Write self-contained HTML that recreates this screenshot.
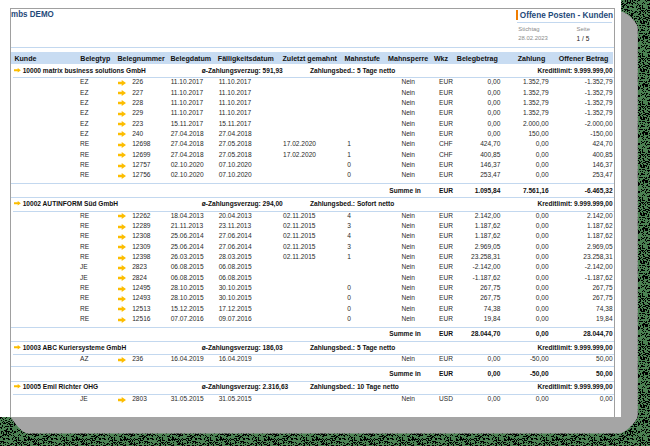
<!DOCTYPE html>
<html><head><meta charset="utf-8"><style>
html,body{margin:0;padding:0;}
body{width:650px;height:446px;position:relative;overflow:hidden;background:#3c6044;font-family:"Liberation Sans",sans-serif;}
.t{position:absolute;white-space:nowrap;}
.r{position:absolute;}
#shadow{position:absolute;left:10.6px;top:11.7px;width:627px;height:422.3px;background:#a5a5a5;border-radius:16.5px;}
#page{position:absolute;left:0;top:0;width:621px;height:417px;background:#fff;overflow:hidden;}
#frame{position:absolute;left:10px;top:8px;width:603px;height:420px;border:1px solid #a0a0a0;border-bottom:none;}
</style></head><body>
<svg id="dither" width="650" height="446" style="position:absolute;left:0;top:0" shape-rendering="crispEdges"><defs><pattern id="pt" width="48" height="48" patternUnits="userSpaceOnUse"><rect width="48" height="48" fill="#4c8253"/><path d="M1 0h1v1h-1zM3 0h1v1h-1zM6 0h1v1h-1zM8 0h1v1h-1zM10 0h1v1h-1zM11 0h1v1h-1zM14 0h1v1h-1zM15 0h1v1h-1zM21 0h1v1h-1zM23 0h1v1h-1zM24 0h1v1h-1zM25 0h1v1h-1zM26 0h1v1h-1zM28 0h1v1h-1zM33 0h1v1h-1zM34 0h1v1h-1zM35 0h1v1h-1zM38 0h1v1h-1zM41 0h1v1h-1zM44 0h1v1h-1zM1 1h1v1h-1zM3 1h1v1h-1zM6 1h1v1h-1zM8 1h1v1h-1zM13 1h1v1h-1zM22 1h1v1h-1zM27 1h1v1h-1zM30 1h1v1h-1zM32 1h1v1h-1zM33 1h1v1h-1zM34 1h1v1h-1zM36 1h1v1h-1zM37 1h1v1h-1zM40 1h1v1h-1zM46 1h1v1h-1zM3 2h1v1h-1zM4 2h1v1h-1zM5 2h1v1h-1zM6 2h1v1h-1zM9 2h1v1h-1zM10 2h1v1h-1zM19 2h1v1h-1zM26 2h1v1h-1zM28 2h1v1h-1zM29 2h1v1h-1zM30 2h1v1h-1zM31 2h1v1h-1zM33 2h1v1h-1zM34 2h1v1h-1zM35 2h1v1h-1zM36 2h1v1h-1zM38 2h1v1h-1zM41 2h1v1h-1zM42 2h1v1h-1zM45 2h1v1h-1zM2 3h1v1h-1zM3 3h1v1h-1zM5 3h1v1h-1zM7 3h1v1h-1zM8 3h1v1h-1zM11 3h1v1h-1zM13 3h1v1h-1zM18 3h1v1h-1zM20 3h1v1h-1zM25 3h1v1h-1zM32 3h1v1h-1zM35 3h1v1h-1zM36 3h1v1h-1zM37 3h1v1h-1zM38 3h1v1h-1zM46 3h1v1h-1zM47 3h1v1h-1zM0 4h1v1h-1zM1 4h1v1h-1zM8 4h1v1h-1zM14 4h1v1h-1zM23 4h1v1h-1zM24 4h1v1h-1zM25 4h1v1h-1zM28 4h1v1h-1zM34 4h1v1h-1zM35 4h1v1h-1zM43 4h1v1h-1zM44 4h1v1h-1zM45 4h1v1h-1zM46 4h1v1h-1zM0 5h1v1h-1zM2 5h1v1h-1zM13 5h1v1h-1zM15 5h1v1h-1zM16 5h1v1h-1zM18 5h1v1h-1zM26 5h1v1h-1zM28 5h1v1h-1zM29 5h1v1h-1zM47 5h1v1h-1zM3 6h1v1h-1zM4 6h1v1h-1zM6 6h1v1h-1zM7 6h1v1h-1zM8 6h1v1h-1zM12 6h1v1h-1zM15 6h1v1h-1zM18 6h1v1h-1zM24 6h1v1h-1zM28 6h1v1h-1zM29 6h1v1h-1zM31 6h1v1h-1zM34 6h1v1h-1zM38 6h1v1h-1zM42 6h1v1h-1zM43 6h1v1h-1zM44 6h1v1h-1zM46 6h1v1h-1zM47 6h1v1h-1zM3 7h1v1h-1zM4 7h1v1h-1zM8 7h1v1h-1zM9 7h1v1h-1zM12 7h1v1h-1zM16 7h1v1h-1zM18 7h1v1h-1zM24 7h1v1h-1zM25 7h1v1h-1zM27 7h1v1h-1zM28 7h1v1h-1zM29 7h1v1h-1zM30 7h1v1h-1zM31 7h1v1h-1zM32 7h1v1h-1zM33 7h1v1h-1zM35 7h1v1h-1zM37 7h1v1h-1zM39 7h1v1h-1zM40 7h1v1h-1zM41 7h1v1h-1zM44 7h1v1h-1zM47 7h1v1h-1zM14 8h1v1h-1zM15 8h1v1h-1zM16 8h1v1h-1zM18 8h1v1h-1zM19 8h1v1h-1zM20 8h1v1h-1zM24 8h1v1h-1zM25 8h1v1h-1zM26 8h1v1h-1zM28 8h1v1h-1zM30 8h1v1h-1zM34 8h1v1h-1zM36 8h1v1h-1zM38 8h1v1h-1zM42 8h1v1h-1zM44 8h1v1h-1zM45 8h1v1h-1zM46 8h1v1h-1zM0 9h1v1h-1zM1 9h1v1h-1zM2 9h1v1h-1zM3 9h1v1h-1zM13 9h1v1h-1zM16 9h1v1h-1zM22 9h1v1h-1zM32 9h1v1h-1zM33 9h1v1h-1zM34 9h1v1h-1zM36 9h1v1h-1zM43 9h1v1h-1zM1 10h1v1h-1zM3 10h1v1h-1zM4 10h1v1h-1zM5 10h1v1h-1zM7 10h1v1h-1zM17 10h1v1h-1zM18 10h1v1h-1zM19 10h1v1h-1zM21 10h1v1h-1zM23 10h1v1h-1zM24 10h1v1h-1zM25 10h1v1h-1zM29 10h1v1h-1zM33 10h1v1h-1zM35 10h1v1h-1zM38 10h1v1h-1zM43 10h1v1h-1zM44 10h1v1h-1zM46 10h1v1h-1zM0 11h1v1h-1zM3 11h1v1h-1zM8 11h1v1h-1zM11 11h1v1h-1zM12 11h1v1h-1zM15 11h1v1h-1zM16 11h1v1h-1zM18 11h1v1h-1zM20 11h1v1h-1zM23 11h1v1h-1zM27 11h1v1h-1zM34 11h1v1h-1zM35 11h1v1h-1zM36 11h1v1h-1zM38 11h1v1h-1zM40 11h1v1h-1zM41 11h1v1h-1zM43 11h1v1h-1zM5 12h1v1h-1zM10 12h1v1h-1zM11 12h1v1h-1zM13 12h1v1h-1zM16 12h1v1h-1zM19 12h1v1h-1zM21 12h1v1h-1zM24 12h1v1h-1zM25 12h1v1h-1zM26 12h1v1h-1zM29 12h1v1h-1zM33 12h1v1h-1zM34 12h1v1h-1zM35 12h1v1h-1zM37 12h1v1h-1zM38 12h1v1h-1zM39 12h1v1h-1zM0 13h1v1h-1zM1 13h1v1h-1zM3 13h1v1h-1zM7 13h1v1h-1zM8 13h1v1h-1zM9 13h1v1h-1zM15 13h1v1h-1zM16 13h1v1h-1zM21 13h1v1h-1zM27 13h1v1h-1zM28 13h1v1h-1zM29 13h1v1h-1zM38 13h1v1h-1zM40 13h1v1h-1zM43 13h1v1h-1zM44 13h1v1h-1zM45 13h1v1h-1zM0 14h1v1h-1zM1 14h1v1h-1zM5 14h1v1h-1zM7 14h1v1h-1zM8 14h1v1h-1zM14 14h1v1h-1zM15 14h1v1h-1zM18 14h1v1h-1zM19 14h1v1h-1zM23 14h1v1h-1zM26 14h1v1h-1zM27 14h1v1h-1zM31 14h1v1h-1zM35 14h1v1h-1zM37 14h1v1h-1zM39 14h1v1h-1zM40 14h1v1h-1zM42 14h1v1h-1zM45 14h1v1h-1zM46 14h1v1h-1zM2 15h1v1h-1zM4 15h1v1h-1zM6 15h1v1h-1zM7 15h1v1h-1zM8 15h1v1h-1zM16 15h1v1h-1zM19 15h1v1h-1zM24 15h1v1h-1zM25 15h1v1h-1zM26 15h1v1h-1zM29 15h1v1h-1zM31 15h1v1h-1zM36 15h1v1h-1zM40 15h1v1h-1zM43 15h1v1h-1zM47 15h1v1h-1zM0 16h1v1h-1zM1 16h1v1h-1zM3 16h1v1h-1zM7 16h1v1h-1zM10 16h1v1h-1zM12 16h1v1h-1zM13 16h1v1h-1zM14 16h1v1h-1zM19 16h1v1h-1zM20 16h1v1h-1zM25 16h1v1h-1zM29 16h1v1h-1zM36 16h1v1h-1zM39 16h1v1h-1zM40 16h1v1h-1zM42 16h1v1h-1zM43 16h1v1h-1zM44 16h1v1h-1zM2 17h1v1h-1zM3 17h1v1h-1zM4 17h1v1h-1zM8 17h1v1h-1zM15 17h1v1h-1zM17 17h1v1h-1zM21 17h1v1h-1zM22 17h1v1h-1zM23 17h1v1h-1zM24 17h1v1h-1zM31 17h1v1h-1zM35 17h1v1h-1zM40 17h1v1h-1zM41 17h1v1h-1zM42 17h1v1h-1zM43 17h1v1h-1zM2 18h1v1h-1zM5 18h1v1h-1zM8 18h1v1h-1zM10 18h1v1h-1zM11 18h1v1h-1zM12 18h1v1h-1zM15 18h1v1h-1zM16 18h1v1h-1zM19 18h1v1h-1zM20 18h1v1h-1zM21 18h1v1h-1zM24 18h1v1h-1zM25 18h1v1h-1zM29 18h1v1h-1zM30 18h1v1h-1zM33 18h1v1h-1zM34 18h1v1h-1zM36 18h1v1h-1zM43 18h1v1h-1zM45 18h1v1h-1zM46 18h1v1h-1zM5 19h1v1h-1zM6 19h1v1h-1zM10 19h1v1h-1zM14 19h1v1h-1zM15 19h1v1h-1zM18 19h1v1h-1zM22 19h1v1h-1zM23 19h1v1h-1zM27 19h1v1h-1zM33 19h1v1h-1zM35 19h1v1h-1zM39 19h1v1h-1zM40 19h1v1h-1zM44 19h1v1h-1zM45 19h1v1h-1zM0 20h1v1h-1zM3 20h1v1h-1zM5 20h1v1h-1zM9 20h1v1h-1zM16 20h1v1h-1zM19 20h1v1h-1zM23 20h1v1h-1zM25 20h1v1h-1zM26 20h1v1h-1zM28 20h1v1h-1zM31 20h1v1h-1zM33 20h1v1h-1zM37 20h1v1h-1zM41 20h1v1h-1zM46 20h1v1h-1zM3 21h1v1h-1zM6 21h1v1h-1zM9 21h1v1h-1zM11 21h1v1h-1zM13 21h1v1h-1zM16 21h1v1h-1zM17 21h1v1h-1zM19 21h1v1h-1zM20 21h1v1h-1zM21 21h1v1h-1zM22 21h1v1h-1zM26 21h1v1h-1zM28 21h1v1h-1zM36 21h1v1h-1zM41 21h1v1h-1zM47 21h1v1h-1zM1 22h1v1h-1zM3 22h1v1h-1zM8 22h1v1h-1zM9 22h1v1h-1zM10 22h1v1h-1zM11 22h1v1h-1zM16 22h1v1h-1zM17 22h1v1h-1zM19 22h1v1h-1zM20 22h1v1h-1zM22 22h1v1h-1zM24 22h1v1h-1zM27 22h1v1h-1zM30 22h1v1h-1zM32 22h1v1h-1zM33 22h1v1h-1zM34 22h1v1h-1zM39 22h1v1h-1zM40 22h1v1h-1zM0 23h1v1h-1zM2 23h1v1h-1zM5 23h1v1h-1zM6 23h1v1h-1zM8 23h1v1h-1zM11 23h1v1h-1zM12 23h1v1h-1zM17 23h1v1h-1zM18 23h1v1h-1zM19 23h1v1h-1zM20 23h1v1h-1zM24 23h1v1h-1zM30 23h1v1h-1zM31 23h1v1h-1zM32 23h1v1h-1zM33 23h1v1h-1zM39 23h1v1h-1zM44 23h1v1h-1zM47 23h1v1h-1zM1 24h1v1h-1zM2 24h1v1h-1zM3 24h1v1h-1zM10 24h1v1h-1zM23 24h1v1h-1zM24 24h1v1h-1zM26 24h1v1h-1zM28 24h1v1h-1zM29 24h1v1h-1zM30 24h1v1h-1zM33 24h1v1h-1zM34 24h1v1h-1zM35 24h1v1h-1zM40 24h1v1h-1zM46 24h1v1h-1zM2 25h1v1h-1zM3 25h1v1h-1zM4 25h1v1h-1zM5 25h1v1h-1zM11 25h1v1h-1zM12 25h1v1h-1zM13 25h1v1h-1zM15 25h1v1h-1zM16 25h1v1h-1zM18 25h1v1h-1zM19 25h1v1h-1zM20 25h1v1h-1zM28 25h1v1h-1zM35 25h1v1h-1zM37 25h1v1h-1zM39 25h1v1h-1zM40 25h1v1h-1zM41 25h1v1h-1zM44 25h1v1h-1zM0 26h1v1h-1zM4 26h1v1h-1zM6 26h1v1h-1zM7 26h1v1h-1zM10 26h1v1h-1zM12 26h1v1h-1zM21 26h1v1h-1zM23 26h1v1h-1zM24 26h1v1h-1zM25 26h1v1h-1zM30 26h1v1h-1zM38 26h1v1h-1zM42 26h1v1h-1zM46 26h1v1h-1zM1 27h1v1h-1zM2 27h1v1h-1zM3 27h1v1h-1zM6 27h1v1h-1zM7 27h1v1h-1zM8 27h1v1h-1zM11 27h1v1h-1zM13 27h1v1h-1zM16 27h1v1h-1zM18 27h1v1h-1zM24 27h1v1h-1zM26 27h1v1h-1zM27 27h1v1h-1zM29 27h1v1h-1zM36 27h1v1h-1zM45 27h1v1h-1zM6 28h1v1h-1zM8 28h1v1h-1zM13 28h1v1h-1zM20 28h1v1h-1zM26 28h1v1h-1zM28 28h1v1h-1zM32 28h1v1h-1zM42 28h1v1h-1zM46 28h1v1h-1zM1 29h1v1h-1zM2 29h1v1h-1zM4 29h1v1h-1zM9 29h1v1h-1zM10 29h1v1h-1zM14 29h1v1h-1zM17 29h1v1h-1zM18 29h1v1h-1zM24 29h1v1h-1zM31 29h1v1h-1zM33 29h1v1h-1zM37 29h1v1h-1zM39 29h1v1h-1zM41 29h1v1h-1zM42 29h1v1h-1zM44 29h1v1h-1zM45 29h1v1h-1zM46 29h1v1h-1zM6 30h1v1h-1zM10 30h1v1h-1zM13 30h1v1h-1zM14 30h1v1h-1zM17 30h1v1h-1zM18 30h1v1h-1zM19 30h1v1h-1zM20 30h1v1h-1zM23 30h1v1h-1zM26 30h1v1h-1zM34 30h1v1h-1zM41 30h1v1h-1zM42 30h1v1h-1zM43 30h1v1h-1zM45 30h1v1h-1zM47 30h1v1h-1zM4 31h1v1h-1zM13 31h1v1h-1zM16 31h1v1h-1zM25 31h1v1h-1zM34 31h1v1h-1zM39 31h1v1h-1zM43 31h1v1h-1zM1 32h1v1h-1zM2 32h1v1h-1zM6 32h1v1h-1zM10 32h1v1h-1zM11 32h1v1h-1zM12 32h1v1h-1zM13 32h1v1h-1zM25 32h1v1h-1zM29 32h1v1h-1zM30 32h1v1h-1zM31 32h1v1h-1zM39 32h1v1h-1zM40 32h1v1h-1zM42 32h1v1h-1zM46 32h1v1h-1zM0 33h1v1h-1zM1 33h1v1h-1zM6 33h1v1h-1zM13 33h1v1h-1zM15 33h1v1h-1zM16 33h1v1h-1zM17 33h1v1h-1zM18 33h1v1h-1zM20 33h1v1h-1zM22 33h1v1h-1zM24 33h1v1h-1zM25 33h1v1h-1zM27 33h1v1h-1zM29 33h1v1h-1zM30 33h1v1h-1zM35 33h1v1h-1zM40 33h1v1h-1zM43 33h1v1h-1zM44 33h1v1h-1zM47 33h1v1h-1zM0 34h1v1h-1zM2 34h1v1h-1zM5 34h1v1h-1zM10 34h1v1h-1zM21 34h1v1h-1zM22 34h1v1h-1zM31 34h1v1h-1zM39 34h1v1h-1zM40 34h1v1h-1zM41 34h1v1h-1zM46 34h1v1h-1zM3 35h1v1h-1zM9 35h1v1h-1zM12 35h1v1h-1zM15 35h1v1h-1zM19 35h1v1h-1zM20 35h1v1h-1zM24 35h1v1h-1zM27 35h1v1h-1zM34 35h1v1h-1zM35 35h1v1h-1zM36 35h1v1h-1zM42 35h1v1h-1zM43 35h1v1h-1zM46 35h1v1h-1zM1 36h1v1h-1zM5 36h1v1h-1zM6 36h1v1h-1zM11 36h1v1h-1zM18 36h1v1h-1zM19 36h1v1h-1zM20 36h1v1h-1zM21 36h1v1h-1zM22 36h1v1h-1zM23 36h1v1h-1zM29 36h1v1h-1zM32 36h1v1h-1zM34 36h1v1h-1zM41 36h1v1h-1zM44 36h1v1h-1zM45 36h1v1h-1zM46 36h1v1h-1zM3 37h1v1h-1zM8 37h1v1h-1zM9 37h1v1h-1zM13 37h1v1h-1zM16 37h1v1h-1zM18 37h1v1h-1zM19 37h1v1h-1zM21 37h1v1h-1zM22 37h1v1h-1zM23 37h1v1h-1zM25 37h1v1h-1zM27 37h1v1h-1zM28 37h1v1h-1zM30 37h1v1h-1zM34 37h1v1h-1zM36 37h1v1h-1zM45 37h1v1h-1zM46 37h1v1h-1zM47 37h1v1h-1zM2 38h1v1h-1zM4 38h1v1h-1zM6 38h1v1h-1zM7 38h1v1h-1zM10 38h1v1h-1zM12 38h1v1h-1zM14 38h1v1h-1zM16 38h1v1h-1zM19 38h1v1h-1zM21 38h1v1h-1zM22 38h1v1h-1zM23 38h1v1h-1zM28 38h1v1h-1zM29 38h1v1h-1zM31 38h1v1h-1zM33 38h1v1h-1zM35 38h1v1h-1zM38 38h1v1h-1zM39 38h1v1h-1zM42 38h1v1h-1zM45 38h1v1h-1zM47 38h1v1h-1zM0 39h1v1h-1zM3 39h1v1h-1zM4 39h1v1h-1zM5 39h1v1h-1zM8 39h1v1h-1zM9 39h1v1h-1zM14 39h1v1h-1zM15 39h1v1h-1zM19 39h1v1h-1zM25 39h1v1h-1zM29 39h1v1h-1zM30 39h1v1h-1zM33 39h1v1h-1zM36 39h1v1h-1zM40 39h1v1h-1zM0 40h1v1h-1zM7 40h1v1h-1zM9 40h1v1h-1zM10 40h1v1h-1zM11 40h1v1h-1zM12 40h1v1h-1zM14 40h1v1h-1zM15 40h1v1h-1zM17 40h1v1h-1zM18 40h1v1h-1zM23 40h1v1h-1zM26 40h1v1h-1zM27 40h1v1h-1zM30 40h1v1h-1zM31 40h1v1h-1zM33 40h1v1h-1zM36 40h1v1h-1zM39 40h1v1h-1zM2 41h1v1h-1zM10 41h1v1h-1zM14 41h1v1h-1zM19 41h1v1h-1zM22 41h1v1h-1zM23 41h1v1h-1zM31 41h1v1h-1zM33 41h1v1h-1zM35 41h1v1h-1zM39 41h1v1h-1zM43 41h1v1h-1zM44 41h1v1h-1zM46 41h1v1h-1zM2 42h1v1h-1zM5 42h1v1h-1zM6 42h1v1h-1zM7 42h1v1h-1zM8 42h1v1h-1zM10 42h1v1h-1zM11 42h1v1h-1zM12 42h1v1h-1zM18 42h1v1h-1zM24 42h1v1h-1zM25 42h1v1h-1zM26 42h1v1h-1zM30 42h1v1h-1zM33 42h1v1h-1zM36 42h1v1h-1zM38 42h1v1h-1zM40 42h1v1h-1zM41 42h1v1h-1zM44 42h1v1h-1zM0 43h1v1h-1zM1 43h1v1h-1zM4 43h1v1h-1zM19 43h1v1h-1zM21 43h1v1h-1zM35 43h1v1h-1zM44 43h1v1h-1zM45 43h1v1h-1zM46 43h1v1h-1zM1 44h1v1h-1zM7 44h1v1h-1zM10 44h1v1h-1zM11 44h1v1h-1zM28 44h1v1h-1zM42 44h1v1h-1zM43 44h1v1h-1zM47 44h1v1h-1zM6 45h1v1h-1zM7 45h1v1h-1zM10 45h1v1h-1zM11 45h1v1h-1zM17 45h1v1h-1zM20 45h1v1h-1zM22 45h1v1h-1zM23 45h1v1h-1zM27 45h1v1h-1zM30 45h1v1h-1zM36 45h1v1h-1zM37 45h1v1h-1zM39 45h1v1h-1zM40 45h1v1h-1zM41 45h1v1h-1zM46 45h1v1h-1zM47 45h1v1h-1zM4 46h1v1h-1zM5 46h1v1h-1zM6 46h1v1h-1zM12 46h1v1h-1zM18 46h1v1h-1zM19 46h1v1h-1zM22 46h1v1h-1zM25 46h1v1h-1zM30 46h1v1h-1zM33 46h1v1h-1zM34 46h1v1h-1zM38 46h1v1h-1zM39 46h1v1h-1zM41 46h1v1h-1zM43 46h1v1h-1zM45 46h1v1h-1zM1 47h1v1h-1zM2 47h1v1h-1zM5 47h1v1h-1zM6 47h1v1h-1zM7 47h1v1h-1zM8 47h1v1h-1zM9 47h1v1h-1zM12 47h1v1h-1zM14 47h1v1h-1zM15 47h1v1h-1zM17 47h1v1h-1zM21 47h1v1h-1zM26 47h1v1h-1zM29 47h1v1h-1zM31 47h1v1h-1zM33 47h1v1h-1zM37 47h1v1h-1zM39 47h1v1h-1zM41 47h1v1h-1zM44 47h1v1h-1z" fill="#000"/></pattern></defs><rect width="650" height="446" fill="url(#pt)"/></svg>
<svg style="position:absolute;left:0;top:0" width="650" height="446"><path d="M10.6 11.7H621.3C626 11.7 637.8 22 637.8 28.6V415C637.8 421 625 433.5 619 433.5H28C22 433.5 13 421 10.6 417Z" fill="#a5a5a5"/></svg>
<div id="page">
<div id="frame"></div>
<div class="t" style="left:11.10px;top:10.83px;font-size:8.0px;line-height:8.0px;font-weight:bold;color:#1f4a7a;transform:scaleY(1.15);transform-origin:0 80%;">mbs DEMO</div>
<div class="r" style="left:515.5px;top:10.2px;width:2.8px;height:9.6px;background:#f07d00"></div>
<div class="t" style="left:519.80px;top:11.96px;font-size:8.2px;line-height:8.2px;font-weight:bold;color:#1f4a7a;">Offene Posten - Kunden</div>
<div class="r" style="left:517px;top:22px;width:95px;height:1px;background:#c3d8ef"></div>
<div class="t" style="left:518.30px;top:26.80px;font-size:5.9px;line-height:5.9px;color:#8a8a8a;">Stichtag</div>
<div class="t" style="left:518.30px;top:36.00px;font-size:5.9px;line-height:5.9px;color:#8a8a8a;">28.02.2023</div>
<div class="t" style="left:576.60px;top:26.80px;font-size:5.9px;line-height:5.9px;color:#8a8a8a;">Seite</div>
<div class="t" style="left:576.60px;top:36.10px;font-size:6.5px;line-height:6.5px;color:#222;">1 / 5</div>
<div class="r" style="left:11px;top:47px;width:603px;height:1px;background:#c3d8ef"></div>
<div class="r" style="left:11px;top:52px;width:602px;height:12.4px;background:#c8dcf2"></div>
<div class="t" style="left:14.40px;top:55.79px;font-size:7.1px;line-height:7.1px;font-weight:bold;color:#111;">Kunde</div>
<div class="t" style="left:80.30px;top:55.79px;font-size:7.1px;line-height:7.1px;font-weight:bold;color:#111;">Belegtyp</div>
<div class="t" style="left:117.50px;top:55.79px;font-size:7.1px;line-height:7.1px;font-weight:bold;color:#111;">Belegnummer</div>
<div class="t" style="left:170.50px;top:55.79px;font-size:7.1px;line-height:7.1px;font-weight:bold;color:#111;">Belegdatum</div>
<div class="t" style="left:217.80px;top:55.79px;font-size:7.1px;line-height:7.1px;font-weight:bold;color:#111;">Fälligkeitsdatum</div>
<div class="t" style="left:282.50px;top:55.79px;font-size:7.1px;line-height:7.1px;font-weight:bold;color:#111;">Zuletzt gemahnt</div>
<div class="t" style="left:344.60px;top:55.79px;font-size:7.1px;line-height:7.1px;font-weight:bold;color:#111;">Mahnstufe</div>
<div class="t" style="left:388.10px;top:55.79px;font-size:7.1px;line-height:7.1px;font-weight:bold;color:#111;">Mahnsperre</div>
<div class="t" style="left:433.90px;top:55.79px;font-size:7.1px;line-height:7.1px;font-weight:bold;color:#111;">Wkz</div>
<div class="t" style="left:456.80px;top:55.79px;font-size:7.1px;line-height:7.1px;font-weight:bold;color:#111;">Belegbetrag</div>
<div class="t" style="left:517.70px;top:55.79px;font-size:7.1px;line-height:7.1px;font-weight:bold;color:#111;">Zahlung</div>
<div class="t" style="left:558.70px;top:55.79px;font-size:7.1px;line-height:7.1px;font-weight:bold;color:#111;">Offener Betrag</div>
<svg class="r" style="left:14.00px;top:67.80px" width="8" height="6" viewBox="0 0 8 6"><path d="M0 1.2H3.7V0L6.9 2.2L3.7 4.4V3.2H0Z" fill="#fcbd00"/></svg>
<div class="t" style="left:22.70px;top:67.82px;font-size:6.6px;line-height:6.6px;font-weight:bold;color:#111;">10000 matrix business solutions GmbH</div>
<div class="t" style="left:201.80px;top:67.82px;font-size:6.6px;line-height:6.6px;font-weight:bold;color:#111;">ø-Zahlungsverzug: 591,93</div>
<div class="t" style="left:310.00px;top:67.82px;font-size:6.6px;line-height:6.6px;font-weight:bold;color:#111;">Zahlungsbed.: 5 Tage netto</div>
<div class="t" style="right:8.40px;top:67.82px;font-size:6.6px;line-height:6.6px;font-weight:bold;color:#111;">Kreditlimit: 9.999.999,00</div>
<div class="r" style="left:13px;top:77px;width:601px;height:1px;background:#c3d8ef"></div>
<div class="t" style="left:80.00px;top:79.32px;font-size:6.6px;line-height:6.6px;color:#2a2a2a;">EZ</div>
<svg class="r" style="left:117.80px;top:79.70px" width="9" height="7" viewBox="0 0 9 7"><path d="M0 1.8H3.7V0L8 3L3.7 6V4.2H0Z" fill="#fcbd00"/></svg>
<div class="t" style="left:132.20px;top:79.32px;font-size:6.6px;line-height:6.6px;color:#2a2a2a;">226</div>
<div class="t" style="left:170.70px;top:79.32px;font-size:6.6px;line-height:6.6px;color:#2a2a2a;">11.10.2017</div>
<div class="t" style="left:218.70px;top:79.32px;font-size:6.6px;line-height:6.6px;color:#2a2a2a;">11.10.2017</div>
<div class="t" style="right:206.00px;top:79.32px;font-size:6.6px;line-height:6.6px;color:#2a2a2a;">Nein</div>
<div class="t" style="left:439.00px;top:79.32px;font-size:6.6px;line-height:6.6px;color:#2a2a2a;">EUR</div>
<div class="t" style="right:120.70px;top:79.32px;font-size:6.6px;line-height:6.6px;color:#2a2a2a;">0,00</div>
<div class="t" style="right:72.40px;top:79.32px;font-size:6.6px;line-height:6.6px;color:#2a2a2a;">1.352,79</div>
<div class="t" style="right:8.40px;top:79.32px;font-size:6.6px;line-height:6.6px;color:#2a2a2a;">-1.352,79</div>
<div class="t" style="left:80.00px;top:89.67px;font-size:6.6px;line-height:6.6px;color:#2a2a2a;">EZ</div>
<svg class="r" style="left:117.80px;top:90.05px" width="9" height="7" viewBox="0 0 9 7"><path d="M0 1.8H3.7V0L8 3L3.7 6V4.2H0Z" fill="#fcbd00"/></svg>
<div class="t" style="left:132.20px;top:89.67px;font-size:6.6px;line-height:6.6px;color:#2a2a2a;">227</div>
<div class="t" style="left:170.70px;top:89.67px;font-size:6.6px;line-height:6.6px;color:#2a2a2a;">11.10.2017</div>
<div class="t" style="left:218.70px;top:89.67px;font-size:6.6px;line-height:6.6px;color:#2a2a2a;">11.10.2017</div>
<div class="t" style="right:206.00px;top:89.67px;font-size:6.6px;line-height:6.6px;color:#2a2a2a;">Nein</div>
<div class="t" style="left:439.00px;top:89.67px;font-size:6.6px;line-height:6.6px;color:#2a2a2a;">EUR</div>
<div class="t" style="right:120.70px;top:89.67px;font-size:6.6px;line-height:6.6px;color:#2a2a2a;">0,00</div>
<div class="t" style="right:72.40px;top:89.67px;font-size:6.6px;line-height:6.6px;color:#2a2a2a;">1.352,79</div>
<div class="t" style="right:8.40px;top:89.67px;font-size:6.6px;line-height:6.6px;color:#2a2a2a;">-1.352,79</div>
<div class="t" style="left:80.00px;top:100.02px;font-size:6.6px;line-height:6.6px;color:#2a2a2a;">EZ</div>
<svg class="r" style="left:117.80px;top:100.40px" width="9" height="7" viewBox="0 0 9 7"><path d="M0 1.8H3.7V0L8 3L3.7 6V4.2H0Z" fill="#fcbd00"/></svg>
<div class="t" style="left:132.20px;top:100.02px;font-size:6.6px;line-height:6.6px;color:#2a2a2a;">228</div>
<div class="t" style="left:170.70px;top:100.02px;font-size:6.6px;line-height:6.6px;color:#2a2a2a;">11.10.2017</div>
<div class="t" style="left:218.70px;top:100.02px;font-size:6.6px;line-height:6.6px;color:#2a2a2a;">11.10.2017</div>
<div class="t" style="right:206.00px;top:100.02px;font-size:6.6px;line-height:6.6px;color:#2a2a2a;">Nein</div>
<div class="t" style="left:439.00px;top:100.02px;font-size:6.6px;line-height:6.6px;color:#2a2a2a;">EUR</div>
<div class="t" style="right:120.70px;top:100.02px;font-size:6.6px;line-height:6.6px;color:#2a2a2a;">0,00</div>
<div class="t" style="right:72.40px;top:100.02px;font-size:6.6px;line-height:6.6px;color:#2a2a2a;">1.352,79</div>
<div class="t" style="right:8.40px;top:100.02px;font-size:6.6px;line-height:6.6px;color:#2a2a2a;">-1.352,79</div>
<div class="t" style="left:80.00px;top:110.37px;font-size:6.6px;line-height:6.6px;color:#2a2a2a;">EZ</div>
<svg class="r" style="left:117.80px;top:110.75px" width="9" height="7" viewBox="0 0 9 7"><path d="M0 1.8H3.7V0L8 3L3.7 6V4.2H0Z" fill="#fcbd00"/></svg>
<div class="t" style="left:132.20px;top:110.37px;font-size:6.6px;line-height:6.6px;color:#2a2a2a;">229</div>
<div class="t" style="left:170.70px;top:110.37px;font-size:6.6px;line-height:6.6px;color:#2a2a2a;">11.10.2017</div>
<div class="t" style="left:218.70px;top:110.37px;font-size:6.6px;line-height:6.6px;color:#2a2a2a;">11.10.2017</div>
<div class="t" style="right:206.00px;top:110.37px;font-size:6.6px;line-height:6.6px;color:#2a2a2a;">Nein</div>
<div class="t" style="left:439.00px;top:110.37px;font-size:6.6px;line-height:6.6px;color:#2a2a2a;">EUR</div>
<div class="t" style="right:120.70px;top:110.37px;font-size:6.6px;line-height:6.6px;color:#2a2a2a;">0,00</div>
<div class="t" style="right:72.40px;top:110.37px;font-size:6.6px;line-height:6.6px;color:#2a2a2a;">1.352,79</div>
<div class="t" style="right:8.40px;top:110.37px;font-size:6.6px;line-height:6.6px;color:#2a2a2a;">-1.352,79</div>
<div class="t" style="left:80.00px;top:120.72px;font-size:6.6px;line-height:6.6px;color:#2a2a2a;">EZ</div>
<svg class="r" style="left:117.80px;top:121.10px" width="9" height="7" viewBox="0 0 9 7"><path d="M0 1.8H3.7V0L8 3L3.7 6V4.2H0Z" fill="#fcbd00"/></svg>
<div class="t" style="left:132.20px;top:120.72px;font-size:6.6px;line-height:6.6px;color:#2a2a2a;">223</div>
<div class="t" style="left:170.70px;top:120.72px;font-size:6.6px;line-height:6.6px;color:#2a2a2a;">15.11.2017</div>
<div class="t" style="left:218.70px;top:120.72px;font-size:6.6px;line-height:6.6px;color:#2a2a2a;">15.11.2017</div>
<div class="t" style="right:206.00px;top:120.72px;font-size:6.6px;line-height:6.6px;color:#2a2a2a;">Nein</div>
<div class="t" style="left:439.00px;top:120.72px;font-size:6.6px;line-height:6.6px;color:#2a2a2a;">EUR</div>
<div class="t" style="right:120.70px;top:120.72px;font-size:6.6px;line-height:6.6px;color:#2a2a2a;">0,00</div>
<div class="t" style="right:72.40px;top:120.72px;font-size:6.6px;line-height:6.6px;color:#2a2a2a;">2.000,00</div>
<div class="t" style="right:8.40px;top:120.72px;font-size:6.6px;line-height:6.6px;color:#2a2a2a;">-2.000,00</div>
<div class="t" style="left:80.00px;top:131.07px;font-size:6.6px;line-height:6.6px;color:#2a2a2a;">EZ</div>
<svg class="r" style="left:117.80px;top:131.45px" width="9" height="7" viewBox="0 0 9 7"><path d="M0 1.8H3.7V0L8 3L3.7 6V4.2H0Z" fill="#fcbd00"/></svg>
<div class="t" style="left:132.20px;top:131.07px;font-size:6.6px;line-height:6.6px;color:#2a2a2a;">240</div>
<div class="t" style="left:170.70px;top:131.07px;font-size:6.6px;line-height:6.6px;color:#2a2a2a;">27.04.2018</div>
<div class="t" style="left:218.70px;top:131.07px;font-size:6.6px;line-height:6.6px;color:#2a2a2a;">27.04.2018</div>
<div class="t" style="right:206.00px;top:131.07px;font-size:6.6px;line-height:6.6px;color:#2a2a2a;">Nein</div>
<div class="t" style="left:439.00px;top:131.07px;font-size:6.6px;line-height:6.6px;color:#2a2a2a;">EUR</div>
<div class="t" style="right:120.70px;top:131.07px;font-size:6.6px;line-height:6.6px;color:#2a2a2a;">0,00</div>
<div class="t" style="right:72.40px;top:131.07px;font-size:6.6px;line-height:6.6px;color:#2a2a2a;">150,00</div>
<div class="t" style="right:8.40px;top:131.07px;font-size:6.6px;line-height:6.6px;color:#2a2a2a;">-150,00</div>
<div class="t" style="left:80.00px;top:141.42px;font-size:6.6px;line-height:6.6px;color:#2a2a2a;">RE</div>
<svg class="r" style="left:117.80px;top:141.80px" width="9" height="7" viewBox="0 0 9 7"><path d="M0 1.8H3.7V0L8 3L3.7 6V4.2H0Z" fill="#fcbd00"/></svg>
<div class="t" style="left:132.20px;top:141.42px;font-size:6.6px;line-height:6.6px;color:#2a2a2a;">12698</div>
<div class="t" style="left:170.70px;top:141.42px;font-size:6.6px;line-height:6.6px;color:#2a2a2a;">27.04.2018</div>
<div class="t" style="left:218.70px;top:141.42px;font-size:6.6px;line-height:6.6px;color:#2a2a2a;">27.05.2018</div>
<div class="t" style="left:283.00px;top:141.42px;font-size:6.6px;line-height:6.6px;color:#2a2a2a;">17.02.2020</div>
<div class="t" style="left:347.30px;top:141.42px;font-size:6.6px;line-height:6.6px;color:#2a2a2a;">1</div>
<div class="t" style="right:206.00px;top:141.42px;font-size:6.6px;line-height:6.6px;color:#2a2a2a;">Nein</div>
<div class="t" style="left:439.00px;top:141.42px;font-size:6.6px;line-height:6.6px;color:#2a2a2a;">CHF</div>
<div class="t" style="right:120.70px;top:141.42px;font-size:6.6px;line-height:6.6px;color:#2a2a2a;">424,70</div>
<div class="t" style="right:72.40px;top:141.42px;font-size:6.6px;line-height:6.6px;color:#2a2a2a;">0,00</div>
<div class="t" style="right:8.40px;top:141.42px;font-size:6.6px;line-height:6.6px;color:#2a2a2a;">424,70</div>
<div class="t" style="left:80.00px;top:151.77px;font-size:6.6px;line-height:6.6px;color:#2a2a2a;">RE</div>
<svg class="r" style="left:117.80px;top:152.15px" width="9" height="7" viewBox="0 0 9 7"><path d="M0 1.8H3.7V0L8 3L3.7 6V4.2H0Z" fill="#fcbd00"/></svg>
<div class="t" style="left:132.20px;top:151.77px;font-size:6.6px;line-height:6.6px;color:#2a2a2a;">12699</div>
<div class="t" style="left:170.70px;top:151.77px;font-size:6.6px;line-height:6.6px;color:#2a2a2a;">27.04.2018</div>
<div class="t" style="left:218.70px;top:151.77px;font-size:6.6px;line-height:6.6px;color:#2a2a2a;">27.05.2018</div>
<div class="t" style="left:283.00px;top:151.77px;font-size:6.6px;line-height:6.6px;color:#2a2a2a;">17.02.2020</div>
<div class="t" style="left:347.30px;top:151.77px;font-size:6.6px;line-height:6.6px;color:#2a2a2a;">1</div>
<div class="t" style="right:206.00px;top:151.77px;font-size:6.6px;line-height:6.6px;color:#2a2a2a;">Nein</div>
<div class="t" style="left:439.00px;top:151.77px;font-size:6.6px;line-height:6.6px;color:#2a2a2a;">CHF</div>
<div class="t" style="right:120.70px;top:151.77px;font-size:6.6px;line-height:6.6px;color:#2a2a2a;">400,85</div>
<div class="t" style="right:72.40px;top:151.77px;font-size:6.6px;line-height:6.6px;color:#2a2a2a;">0,00</div>
<div class="t" style="right:8.40px;top:151.77px;font-size:6.6px;line-height:6.6px;color:#2a2a2a;">400,85</div>
<div class="t" style="left:80.00px;top:162.12px;font-size:6.6px;line-height:6.6px;color:#2a2a2a;">RE</div>
<svg class="r" style="left:117.80px;top:162.50px" width="9" height="7" viewBox="0 0 9 7"><path d="M0 1.8H3.7V0L8 3L3.7 6V4.2H0Z" fill="#fcbd00"/></svg>
<div class="t" style="left:132.20px;top:162.12px;font-size:6.6px;line-height:6.6px;color:#2a2a2a;">12757</div>
<div class="t" style="left:170.70px;top:162.12px;font-size:6.6px;line-height:6.6px;color:#2a2a2a;">02.10.2020</div>
<div class="t" style="left:218.70px;top:162.12px;font-size:6.6px;line-height:6.6px;color:#2a2a2a;">07.10.2020</div>
<div class="t" style="left:347.30px;top:162.12px;font-size:6.6px;line-height:6.6px;color:#2a2a2a;">0</div>
<div class="t" style="right:206.00px;top:162.12px;font-size:6.6px;line-height:6.6px;color:#2a2a2a;">Nein</div>
<div class="t" style="left:439.00px;top:162.12px;font-size:6.6px;line-height:6.6px;color:#2a2a2a;">EUR</div>
<div class="t" style="right:120.70px;top:162.12px;font-size:6.6px;line-height:6.6px;color:#2a2a2a;">146,37</div>
<div class="t" style="right:72.40px;top:162.12px;font-size:6.6px;line-height:6.6px;color:#2a2a2a;">0,00</div>
<div class="t" style="right:8.40px;top:162.12px;font-size:6.6px;line-height:6.6px;color:#2a2a2a;">146,37</div>
<div class="t" style="left:80.00px;top:172.47px;font-size:6.6px;line-height:6.6px;color:#2a2a2a;">RE</div>
<svg class="r" style="left:117.80px;top:172.85px" width="9" height="7" viewBox="0 0 9 7"><path d="M0 1.8H3.7V0L8 3L3.7 6V4.2H0Z" fill="#fcbd00"/></svg>
<div class="t" style="left:132.20px;top:172.47px;font-size:6.6px;line-height:6.6px;color:#2a2a2a;">12756</div>
<div class="t" style="left:170.70px;top:172.47px;font-size:6.6px;line-height:6.6px;color:#2a2a2a;">02.10.2020</div>
<div class="t" style="left:218.70px;top:172.47px;font-size:6.6px;line-height:6.6px;color:#2a2a2a;">07.10.2020</div>
<div class="t" style="left:347.30px;top:172.47px;font-size:6.6px;line-height:6.6px;color:#2a2a2a;">0</div>
<div class="t" style="right:206.00px;top:172.47px;font-size:6.6px;line-height:6.6px;color:#2a2a2a;">Nein</div>
<div class="t" style="left:439.00px;top:172.47px;font-size:6.6px;line-height:6.6px;color:#2a2a2a;">EUR</div>
<div class="t" style="right:120.70px;top:172.47px;font-size:6.6px;line-height:6.6px;color:#2a2a2a;">253,47</div>
<div class="t" style="right:72.40px;top:172.47px;font-size:6.6px;line-height:6.6px;color:#2a2a2a;">0,00</div>
<div class="t" style="right:8.40px;top:172.47px;font-size:6.6px;line-height:6.6px;color:#2a2a2a;">253,47</div>
<div class="r" style="left:11px;top:183px;width:603px;height:1px;background:#c3d8ef"></div>
<div class="t" style="right:200.20px;top:187.52px;font-size:6.6px;line-height:6.6px;font-weight:bold;color:#111;">Summe in</div>
<div class="t" style="left:439.00px;top:187.52px;font-size:6.6px;line-height:6.6px;font-weight:bold;color:#111;">EUR</div>
<div class="t" style="right:120.70px;top:187.52px;font-size:6.6px;line-height:6.6px;font-weight:bold;color:#111;">1.095,84</div>
<div class="t" style="right:72.40px;top:187.52px;font-size:6.6px;line-height:6.6px;font-weight:bold;color:#111;">7.561,16</div>
<div class="t" style="right:8.40px;top:187.52px;font-size:6.6px;line-height:6.6px;font-weight:bold;color:#111;">-6.465,32</div>
<div class="r" style="left:11px;top:197px;width:603px;height:1px;background:#c3d8ef"></div>
<svg class="r" style="left:14.00px;top:200.60px" width="8" height="6" viewBox="0 0 8 6"><path d="M0 1.2H3.7V0L6.9 2.2L3.7 4.4V3.2H0Z" fill="#fcbd00"/></svg>
<div class="t" style="left:22.70px;top:200.62px;font-size:6.6px;line-height:6.6px;font-weight:bold;color:#111;">10002 AUTINFORM Süd GmbH</div>
<div class="t" style="left:201.80px;top:200.62px;font-size:6.6px;line-height:6.6px;font-weight:bold;color:#111;">ø-Zahlungsverzug: 294,00</div>
<div class="t" style="left:310.00px;top:200.62px;font-size:6.6px;line-height:6.6px;font-weight:bold;color:#111;">Zahlungsbed.: Sofort netto</div>
<div class="t" style="right:8.40px;top:200.62px;font-size:6.6px;line-height:6.6px;font-weight:bold;color:#111;">Kreditlimit: 9.999.999,00</div>
<div class="r" style="left:13px;top:211px;width:601px;height:1px;background:#c3d8ef"></div>
<div class="t" style="left:80.00px;top:212.82px;font-size:6.6px;line-height:6.6px;color:#2a2a2a;">RE</div>
<svg class="r" style="left:117.80px;top:213.20px" width="9" height="7" viewBox="0 0 9 7"><path d="M0 1.8H3.7V0L8 3L3.7 6V4.2H0Z" fill="#fcbd00"/></svg>
<div class="t" style="left:132.20px;top:212.82px;font-size:6.6px;line-height:6.6px;color:#2a2a2a;">12262</div>
<div class="t" style="left:170.70px;top:212.82px;font-size:6.6px;line-height:6.6px;color:#2a2a2a;">18.04.2013</div>
<div class="t" style="left:218.70px;top:212.82px;font-size:6.6px;line-height:6.6px;color:#2a2a2a;">20.04.2013</div>
<div class="t" style="left:283.00px;top:212.82px;font-size:6.6px;line-height:6.6px;color:#2a2a2a;">02.11.2015</div>
<div class="t" style="left:347.30px;top:212.82px;font-size:6.6px;line-height:6.6px;color:#2a2a2a;">4</div>
<div class="t" style="right:206.00px;top:212.82px;font-size:6.6px;line-height:6.6px;color:#2a2a2a;">Nein</div>
<div class="t" style="left:439.00px;top:212.82px;font-size:6.6px;line-height:6.6px;color:#2a2a2a;">EUR</div>
<div class="t" style="right:120.70px;top:212.82px;font-size:6.6px;line-height:6.6px;color:#2a2a2a;">2.142,00</div>
<div class="t" style="right:72.40px;top:212.82px;font-size:6.6px;line-height:6.6px;color:#2a2a2a;">0,00</div>
<div class="t" style="right:8.40px;top:212.82px;font-size:6.6px;line-height:6.6px;color:#2a2a2a;">2.142,00</div>
<div class="t" style="left:80.00px;top:223.15px;font-size:6.6px;line-height:6.6px;color:#2a2a2a;">RE</div>
<svg class="r" style="left:117.80px;top:223.53px" width="9" height="7" viewBox="0 0 9 7"><path d="M0 1.8H3.7V0L8 3L3.7 6V4.2H0Z" fill="#fcbd00"/></svg>
<div class="t" style="left:132.20px;top:223.15px;font-size:6.6px;line-height:6.6px;color:#2a2a2a;">12289</div>
<div class="t" style="left:170.70px;top:223.15px;font-size:6.6px;line-height:6.6px;color:#2a2a2a;">21.11.2013</div>
<div class="t" style="left:218.70px;top:223.15px;font-size:6.6px;line-height:6.6px;color:#2a2a2a;">23.11.2013</div>
<div class="t" style="left:283.00px;top:223.15px;font-size:6.6px;line-height:6.6px;color:#2a2a2a;">02.11.2015</div>
<div class="t" style="left:347.30px;top:223.15px;font-size:6.6px;line-height:6.6px;color:#2a2a2a;">3</div>
<div class="t" style="right:206.00px;top:223.15px;font-size:6.6px;line-height:6.6px;color:#2a2a2a;">Nein</div>
<div class="t" style="left:439.00px;top:223.15px;font-size:6.6px;line-height:6.6px;color:#2a2a2a;">EUR</div>
<div class="t" style="right:120.70px;top:223.15px;font-size:6.6px;line-height:6.6px;color:#2a2a2a;">1.187,62</div>
<div class="t" style="right:72.40px;top:223.15px;font-size:6.6px;line-height:6.6px;color:#2a2a2a;">0,00</div>
<div class="t" style="right:8.40px;top:223.15px;font-size:6.6px;line-height:6.6px;color:#2a2a2a;">1.187,62</div>
<div class="t" style="left:80.00px;top:233.48px;font-size:6.6px;line-height:6.6px;color:#2a2a2a;">RE</div>
<svg class="r" style="left:117.80px;top:233.86px" width="9" height="7" viewBox="0 0 9 7"><path d="M0 1.8H3.7V0L8 3L3.7 6V4.2H0Z" fill="#fcbd00"/></svg>
<div class="t" style="left:132.20px;top:233.48px;font-size:6.6px;line-height:6.6px;color:#2a2a2a;">12308</div>
<div class="t" style="left:170.70px;top:233.48px;font-size:6.6px;line-height:6.6px;color:#2a2a2a;">25.06.2014</div>
<div class="t" style="left:218.70px;top:233.48px;font-size:6.6px;line-height:6.6px;color:#2a2a2a;">27.06.2014</div>
<div class="t" style="left:283.00px;top:233.48px;font-size:6.6px;line-height:6.6px;color:#2a2a2a;">02.11.2015</div>
<div class="t" style="left:347.30px;top:233.48px;font-size:6.6px;line-height:6.6px;color:#2a2a2a;">4</div>
<div class="t" style="right:206.00px;top:233.48px;font-size:6.6px;line-height:6.6px;color:#2a2a2a;">Nein</div>
<div class="t" style="left:439.00px;top:233.48px;font-size:6.6px;line-height:6.6px;color:#2a2a2a;">EUR</div>
<div class="t" style="right:120.70px;top:233.48px;font-size:6.6px;line-height:6.6px;color:#2a2a2a;">1.187,62</div>
<div class="t" style="right:72.40px;top:233.48px;font-size:6.6px;line-height:6.6px;color:#2a2a2a;">0,00</div>
<div class="t" style="right:8.40px;top:233.48px;font-size:6.6px;line-height:6.6px;color:#2a2a2a;">1.187,62</div>
<div class="t" style="left:80.00px;top:243.81px;font-size:6.6px;line-height:6.6px;color:#2a2a2a;">RE</div>
<svg class="r" style="left:117.80px;top:244.19px" width="9" height="7" viewBox="0 0 9 7"><path d="M0 1.8H3.7V0L8 3L3.7 6V4.2H0Z" fill="#fcbd00"/></svg>
<div class="t" style="left:132.20px;top:243.81px;font-size:6.6px;line-height:6.6px;color:#2a2a2a;">12309</div>
<div class="t" style="left:170.70px;top:243.81px;font-size:6.6px;line-height:6.6px;color:#2a2a2a;">25.06.2014</div>
<div class="t" style="left:218.70px;top:243.81px;font-size:6.6px;line-height:6.6px;color:#2a2a2a;">27.06.2014</div>
<div class="t" style="left:283.00px;top:243.81px;font-size:6.6px;line-height:6.6px;color:#2a2a2a;">02.11.2015</div>
<div class="t" style="left:347.30px;top:243.81px;font-size:6.6px;line-height:6.6px;color:#2a2a2a;">3</div>
<div class="t" style="right:206.00px;top:243.81px;font-size:6.6px;line-height:6.6px;color:#2a2a2a;">Nein</div>
<div class="t" style="left:439.00px;top:243.81px;font-size:6.6px;line-height:6.6px;color:#2a2a2a;">EUR</div>
<div class="t" style="right:120.70px;top:243.81px;font-size:6.6px;line-height:6.6px;color:#2a2a2a;">2.969,05</div>
<div class="t" style="right:72.40px;top:243.81px;font-size:6.6px;line-height:6.6px;color:#2a2a2a;">0,00</div>
<div class="t" style="right:8.40px;top:243.81px;font-size:6.6px;line-height:6.6px;color:#2a2a2a;">2.969,05</div>
<div class="t" style="left:80.00px;top:254.14px;font-size:6.6px;line-height:6.6px;color:#2a2a2a;">RE</div>
<svg class="r" style="left:117.80px;top:254.52px" width="9" height="7" viewBox="0 0 9 7"><path d="M0 1.8H3.7V0L8 3L3.7 6V4.2H0Z" fill="#fcbd00"/></svg>
<div class="t" style="left:132.20px;top:254.14px;font-size:6.6px;line-height:6.6px;color:#2a2a2a;">12398</div>
<div class="t" style="left:170.70px;top:254.14px;font-size:6.6px;line-height:6.6px;color:#2a2a2a;">26.03.2015</div>
<div class="t" style="left:218.70px;top:254.14px;font-size:6.6px;line-height:6.6px;color:#2a2a2a;">28.03.2015</div>
<div class="t" style="left:283.00px;top:254.14px;font-size:6.6px;line-height:6.6px;color:#2a2a2a;">02.11.2015</div>
<div class="t" style="left:347.30px;top:254.14px;font-size:6.6px;line-height:6.6px;color:#2a2a2a;">1</div>
<div class="t" style="right:206.00px;top:254.14px;font-size:6.6px;line-height:6.6px;color:#2a2a2a;">Nein</div>
<div class="t" style="left:439.00px;top:254.14px;font-size:6.6px;line-height:6.6px;color:#2a2a2a;">EUR</div>
<div class="t" style="right:120.70px;top:254.14px;font-size:6.6px;line-height:6.6px;color:#2a2a2a;">23.258,31</div>
<div class="t" style="right:72.40px;top:254.14px;font-size:6.6px;line-height:6.6px;color:#2a2a2a;">0,00</div>
<div class="t" style="right:8.40px;top:254.14px;font-size:6.6px;line-height:6.6px;color:#2a2a2a;">23.258,31</div>
<div class="t" style="left:80.00px;top:264.47px;font-size:6.6px;line-height:6.6px;color:#2a2a2a;">JE</div>
<svg class="r" style="left:117.80px;top:264.85px" width="9" height="7" viewBox="0 0 9 7"><path d="M0 1.8H3.7V0L8 3L3.7 6V4.2H0Z" fill="#fcbd00"/></svg>
<div class="t" style="left:132.20px;top:264.47px;font-size:6.6px;line-height:6.6px;color:#2a2a2a;">2823</div>
<div class="t" style="left:170.70px;top:264.47px;font-size:6.6px;line-height:6.6px;color:#2a2a2a;">06.08.2015</div>
<div class="t" style="left:218.70px;top:264.47px;font-size:6.6px;line-height:6.6px;color:#2a2a2a;">06.08.2015</div>
<div class="t" style="right:206.00px;top:264.47px;font-size:6.6px;line-height:6.6px;color:#2a2a2a;">Nein</div>
<div class="t" style="left:439.00px;top:264.47px;font-size:6.6px;line-height:6.6px;color:#2a2a2a;">EUR</div>
<div class="t" style="right:120.70px;top:264.47px;font-size:6.6px;line-height:6.6px;color:#2a2a2a;">-2.142,00</div>
<div class="t" style="right:72.40px;top:264.47px;font-size:6.6px;line-height:6.6px;color:#2a2a2a;">0,00</div>
<div class="t" style="right:8.40px;top:264.47px;font-size:6.6px;line-height:6.6px;color:#2a2a2a;">-2.142,00</div>
<div class="t" style="left:80.00px;top:274.80px;font-size:6.6px;line-height:6.6px;color:#2a2a2a;">JE</div>
<svg class="r" style="left:117.80px;top:275.18px" width="9" height="7" viewBox="0 0 9 7"><path d="M0 1.8H3.7V0L8 3L3.7 6V4.2H0Z" fill="#fcbd00"/></svg>
<div class="t" style="left:132.20px;top:274.80px;font-size:6.6px;line-height:6.6px;color:#2a2a2a;">2824</div>
<div class="t" style="left:170.70px;top:274.80px;font-size:6.6px;line-height:6.6px;color:#2a2a2a;">06.08.2015</div>
<div class="t" style="left:218.70px;top:274.80px;font-size:6.6px;line-height:6.6px;color:#2a2a2a;">06.08.2015</div>
<div class="t" style="right:206.00px;top:274.80px;font-size:6.6px;line-height:6.6px;color:#2a2a2a;">Nein</div>
<div class="t" style="left:439.00px;top:274.80px;font-size:6.6px;line-height:6.6px;color:#2a2a2a;">EUR</div>
<div class="t" style="right:120.70px;top:274.80px;font-size:6.6px;line-height:6.6px;color:#2a2a2a;">-1.187,62</div>
<div class="t" style="right:72.40px;top:274.80px;font-size:6.6px;line-height:6.6px;color:#2a2a2a;">0,00</div>
<div class="t" style="right:8.40px;top:274.80px;font-size:6.6px;line-height:6.6px;color:#2a2a2a;">-1.187,62</div>
<div class="t" style="left:80.00px;top:285.13px;font-size:6.6px;line-height:6.6px;color:#2a2a2a;">RE</div>
<svg class="r" style="left:117.80px;top:285.51px" width="9" height="7" viewBox="0 0 9 7"><path d="M0 1.8H3.7V0L8 3L3.7 6V4.2H0Z" fill="#fcbd00"/></svg>
<div class="t" style="left:132.20px;top:285.13px;font-size:6.6px;line-height:6.6px;color:#2a2a2a;">12495</div>
<div class="t" style="left:170.70px;top:285.13px;font-size:6.6px;line-height:6.6px;color:#2a2a2a;">28.10.2015</div>
<div class="t" style="left:218.70px;top:285.13px;font-size:6.6px;line-height:6.6px;color:#2a2a2a;">30.10.2015</div>
<div class="t" style="left:347.30px;top:285.13px;font-size:6.6px;line-height:6.6px;color:#2a2a2a;">0</div>
<div class="t" style="right:206.00px;top:285.13px;font-size:6.6px;line-height:6.6px;color:#2a2a2a;">Nein</div>
<div class="t" style="left:439.00px;top:285.13px;font-size:6.6px;line-height:6.6px;color:#2a2a2a;">EUR</div>
<div class="t" style="right:120.70px;top:285.13px;font-size:6.6px;line-height:6.6px;color:#2a2a2a;">267,75</div>
<div class="t" style="right:72.40px;top:285.13px;font-size:6.6px;line-height:6.6px;color:#2a2a2a;">0,00</div>
<div class="t" style="right:8.40px;top:285.13px;font-size:6.6px;line-height:6.6px;color:#2a2a2a;">267,75</div>
<div class="t" style="left:80.00px;top:295.46px;font-size:6.6px;line-height:6.6px;color:#2a2a2a;">RE</div>
<svg class="r" style="left:117.80px;top:295.84px" width="9" height="7" viewBox="0 0 9 7"><path d="M0 1.8H3.7V0L8 3L3.7 6V4.2H0Z" fill="#fcbd00"/></svg>
<div class="t" style="left:132.20px;top:295.46px;font-size:6.6px;line-height:6.6px;color:#2a2a2a;">12493</div>
<div class="t" style="left:170.70px;top:295.46px;font-size:6.6px;line-height:6.6px;color:#2a2a2a;">28.10.2015</div>
<div class="t" style="left:218.70px;top:295.46px;font-size:6.6px;line-height:6.6px;color:#2a2a2a;">30.10.2015</div>
<div class="t" style="left:347.30px;top:295.46px;font-size:6.6px;line-height:6.6px;color:#2a2a2a;">0</div>
<div class="t" style="right:206.00px;top:295.46px;font-size:6.6px;line-height:6.6px;color:#2a2a2a;">Nein</div>
<div class="t" style="left:439.00px;top:295.46px;font-size:6.6px;line-height:6.6px;color:#2a2a2a;">EUR</div>
<div class="t" style="right:120.70px;top:295.46px;font-size:6.6px;line-height:6.6px;color:#2a2a2a;">267,75</div>
<div class="t" style="right:72.40px;top:295.46px;font-size:6.6px;line-height:6.6px;color:#2a2a2a;">0,00</div>
<div class="t" style="right:8.40px;top:295.46px;font-size:6.6px;line-height:6.6px;color:#2a2a2a;">267,75</div>
<div class="t" style="left:80.00px;top:305.79px;font-size:6.6px;line-height:6.6px;color:#2a2a2a;">RE</div>
<svg class="r" style="left:117.80px;top:306.17px" width="9" height="7" viewBox="0 0 9 7"><path d="M0 1.8H3.7V0L8 3L3.7 6V4.2H0Z" fill="#fcbd00"/></svg>
<div class="t" style="left:132.20px;top:305.79px;font-size:6.6px;line-height:6.6px;color:#2a2a2a;">12513</div>
<div class="t" style="left:170.70px;top:305.79px;font-size:6.6px;line-height:6.6px;color:#2a2a2a;">15.12.2015</div>
<div class="t" style="left:218.70px;top:305.79px;font-size:6.6px;line-height:6.6px;color:#2a2a2a;">17.12.2015</div>
<div class="t" style="left:347.30px;top:305.79px;font-size:6.6px;line-height:6.6px;color:#2a2a2a;">0</div>
<div class="t" style="right:206.00px;top:305.79px;font-size:6.6px;line-height:6.6px;color:#2a2a2a;">Nein</div>
<div class="t" style="left:439.00px;top:305.79px;font-size:6.6px;line-height:6.6px;color:#2a2a2a;">EUR</div>
<div class="t" style="right:120.70px;top:305.79px;font-size:6.6px;line-height:6.6px;color:#2a2a2a;">74,38</div>
<div class="t" style="right:72.40px;top:305.79px;font-size:6.6px;line-height:6.6px;color:#2a2a2a;">0,00</div>
<div class="t" style="right:8.40px;top:305.79px;font-size:6.6px;line-height:6.6px;color:#2a2a2a;">74,38</div>
<div class="t" style="left:80.00px;top:316.12px;font-size:6.6px;line-height:6.6px;color:#2a2a2a;">RE</div>
<svg class="r" style="left:117.80px;top:316.50px" width="9" height="7" viewBox="0 0 9 7"><path d="M0 1.8H3.7V0L8 3L3.7 6V4.2H0Z" fill="#fcbd00"/></svg>
<div class="t" style="left:132.20px;top:316.12px;font-size:6.6px;line-height:6.6px;color:#2a2a2a;">12516</div>
<div class="t" style="left:170.70px;top:316.12px;font-size:6.6px;line-height:6.6px;color:#2a2a2a;">07.07.2016</div>
<div class="t" style="left:218.70px;top:316.12px;font-size:6.6px;line-height:6.6px;color:#2a2a2a;">09.07.2016</div>
<div class="t" style="left:347.30px;top:316.12px;font-size:6.6px;line-height:6.6px;color:#2a2a2a;">0</div>
<div class="t" style="right:206.00px;top:316.12px;font-size:6.6px;line-height:6.6px;color:#2a2a2a;">Nein</div>
<div class="t" style="left:439.00px;top:316.12px;font-size:6.6px;line-height:6.6px;color:#2a2a2a;">EUR</div>
<div class="t" style="right:120.70px;top:316.12px;font-size:6.6px;line-height:6.6px;color:#2a2a2a;">19,84</div>
<div class="t" style="right:72.40px;top:316.12px;font-size:6.6px;line-height:6.6px;color:#2a2a2a;">0,00</div>
<div class="t" style="right:8.40px;top:316.12px;font-size:6.6px;line-height:6.6px;color:#2a2a2a;">19,84</div>
<div class="r" style="left:11px;top:327px;width:603px;height:1px;background:#c3d8ef"></div>
<div class="t" style="right:200.20px;top:331.02px;font-size:6.6px;line-height:6.6px;font-weight:bold;color:#111;">Summe in</div>
<div class="t" style="left:439.00px;top:331.02px;font-size:6.6px;line-height:6.6px;font-weight:bold;color:#111;">EUR</div>
<div class="t" style="right:120.70px;top:331.02px;font-size:6.6px;line-height:6.6px;font-weight:bold;color:#111;">28.044,70</div>
<div class="t" style="right:72.40px;top:331.02px;font-size:6.6px;line-height:6.6px;font-weight:bold;color:#111;">0,00</div>
<div class="t" style="right:8.40px;top:331.02px;font-size:6.6px;line-height:6.6px;font-weight:bold;color:#111;">28.044,70</div>
<div class="r" style="left:11px;top:341px;width:603px;height:1px;background:#c3d8ef"></div>
<svg class="r" style="left:14.00px;top:344.60px" width="8" height="6" viewBox="0 0 8 6"><path d="M0 1.2H3.7V0L6.9 2.2L3.7 4.4V3.2H0Z" fill="#fcbd00"/></svg>
<div class="t" style="left:22.70px;top:344.62px;font-size:6.6px;line-height:6.6px;font-weight:bold;color:#111;">10003 ABC Kuriersysteme GmbH</div>
<div class="t" style="left:201.80px;top:344.62px;font-size:6.6px;line-height:6.6px;font-weight:bold;color:#111;">ø-Zahlungsverzug: 186,03</div>
<div class="t" style="left:310.00px;top:344.62px;font-size:6.6px;line-height:6.6px;font-weight:bold;color:#111;">Zahlungsbed.: 5 Tage netto</div>
<div class="t" style="right:8.40px;top:344.62px;font-size:6.6px;line-height:6.6px;font-weight:bold;color:#111;">Kreditlimit: 9.999.999,00</div>
<div class="r" style="left:13px;top:354px;width:601px;height:1px;background:#c3d8ef"></div>
<div class="t" style="left:80.00px;top:356.12px;font-size:6.6px;line-height:6.6px;color:#2a2a2a;">AZ</div>
<svg class="r" style="left:117.80px;top:356.50px" width="9" height="7" viewBox="0 0 9 7"><path d="M0 1.8H3.7V0L8 3L3.7 6V4.2H0Z" fill="#fcbd00"/></svg>
<div class="t" style="left:132.20px;top:356.12px;font-size:6.6px;line-height:6.6px;color:#2a2a2a;">236</div>
<div class="t" style="left:170.70px;top:356.12px;font-size:6.6px;line-height:6.6px;color:#2a2a2a;">16.04.2019</div>
<div class="t" style="left:218.70px;top:356.12px;font-size:6.6px;line-height:6.6px;color:#2a2a2a;">16.04.2019</div>
<div class="t" style="right:206.00px;top:356.12px;font-size:6.6px;line-height:6.6px;color:#2a2a2a;">Nein</div>
<div class="t" style="left:439.00px;top:356.12px;font-size:6.6px;line-height:6.6px;color:#2a2a2a;">EUR</div>
<div class="t" style="right:120.70px;top:356.12px;font-size:6.6px;line-height:6.6px;color:#2a2a2a;">0,00</div>
<div class="t" style="right:72.40px;top:356.12px;font-size:6.6px;line-height:6.6px;color:#2a2a2a;">-50,00</div>
<div class="t" style="right:8.40px;top:356.12px;font-size:6.6px;line-height:6.6px;color:#2a2a2a;">50,00</div>
<div class="r" style="left:11px;top:366px;width:603px;height:1px;background:#c3d8ef"></div>
<div class="t" style="right:200.20px;top:371.02px;font-size:6.6px;line-height:6.6px;font-weight:bold;color:#111;">Summe in</div>
<div class="t" style="left:439.00px;top:371.02px;font-size:6.6px;line-height:6.6px;font-weight:bold;color:#111;">EUR</div>
<div class="t" style="right:120.70px;top:371.02px;font-size:6.6px;line-height:6.6px;font-weight:bold;color:#111;">0,00</div>
<div class="t" style="right:72.40px;top:371.02px;font-size:6.6px;line-height:6.6px;font-weight:bold;color:#111;">-50,00</div>
<div class="t" style="right:8.40px;top:371.02px;font-size:6.6px;line-height:6.6px;font-weight:bold;color:#111;">50,00</div>
<div class="r" style="left:11px;top:381px;width:603px;height:1px;background:#c3d8ef"></div>
<svg class="r" style="left:14.00px;top:384.20px" width="8" height="6" viewBox="0 0 8 6"><path d="M0 1.2H3.7V0L6.9 2.2L3.7 4.4V3.2H0Z" fill="#fcbd00"/></svg>
<div class="t" style="left:22.70px;top:384.22px;font-size:6.6px;line-height:6.6px;font-weight:bold;color:#111;">10005 Emil Richter OHG</div>
<div class="t" style="left:201.80px;top:384.22px;font-size:6.6px;line-height:6.6px;font-weight:bold;color:#111;">ø-Zahlungsverzug: 2.316,63</div>
<div class="t" style="left:310.00px;top:384.22px;font-size:6.6px;line-height:6.6px;font-weight:bold;color:#111;">Zahlungsbed.: 10 Tage netto</div>
<div class="t" style="right:8.40px;top:384.22px;font-size:6.6px;line-height:6.6px;font-weight:bold;color:#111;">Kreditlimit: 9.999.999,00</div>
<div class="r" style="left:13px;top:394px;width:601px;height:1px;background:#c3d8ef"></div>
<div class="t" style="left:80.00px;top:396.22px;font-size:6.6px;line-height:6.6px;color:#2a2a2a;">JE</div>
<svg class="r" style="left:117.80px;top:396.60px" width="9" height="7" viewBox="0 0 9 7"><path d="M0 1.8H3.7V0L8 3L3.7 6V4.2H0Z" fill="#fcbd00"/></svg>
<div class="t" style="left:132.20px;top:396.22px;font-size:6.6px;line-height:6.6px;color:#2a2a2a;">2803</div>
<div class="t" style="left:170.70px;top:396.22px;font-size:6.6px;line-height:6.6px;color:#2a2a2a;">31.05.2015</div>
<div class="t" style="left:218.70px;top:396.22px;font-size:6.6px;line-height:6.6px;color:#2a2a2a;">31.05.2015</div>
<div class="t" style="right:206.00px;top:396.22px;font-size:6.6px;line-height:6.6px;color:#2a2a2a;">Nein</div>
<div class="t" style="left:439.00px;top:396.22px;font-size:6.6px;line-height:6.6px;color:#2a2a2a;">USD</div>
<div class="t" style="right:120.70px;top:396.22px;font-size:6.6px;line-height:6.6px;color:#2a2a2a;">0,00</div>
<div class="t" style="right:72.40px;top:396.22px;font-size:6.6px;line-height:6.6px;color:#2a2a2a;">0,00</div>
<div class="t" style="right:8.40px;top:396.22px;font-size:6.6px;line-height:6.6px;color:#2a2a2a;">0,00</div>
</div>
</body></html>
